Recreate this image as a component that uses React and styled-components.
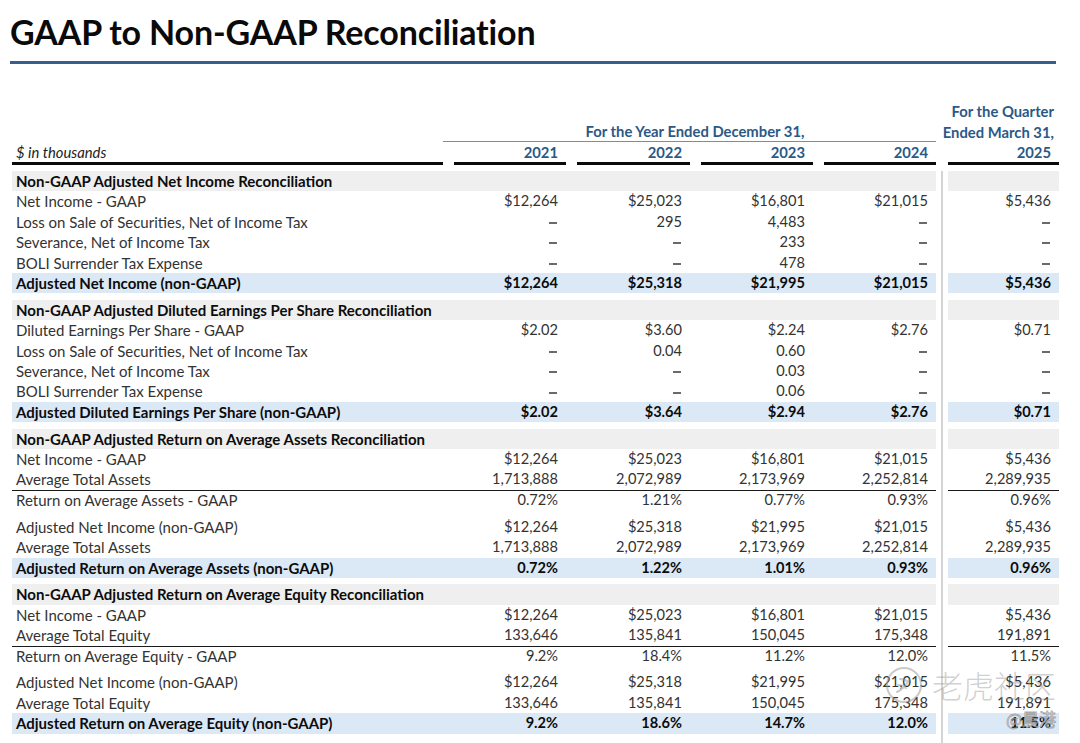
import React from "react";
import styled, { createGlobalStyle } from "styled-components";

const GlobalStyle = createGlobalStyle`
  html, body { margin: 0; padding: 0; background: #ffffff; }
  body { font-family: Lato, "Open Sans", "Liberation Sans", sans-serif; }
  #root { width: 1080px; height: 743px; }
`;

const BLUE_TEXT = "#2b5987";
const GRID = "431px 123px 124px 123px 123px 12px 111px";

const Page = styled.div`
  position: relative;
  width: 1080px;
  height: 743px;
  overflow: hidden;
  background: #fff;
`;

const Title = styled.h1`
  margin: 0;
  padding: 12px 0 0 10px;
  font-family: Lato, "Open Sans", sans-serif;
  font-weight: 700;
  font-size: 34px;
  line-height: 40px;
  color: #0a0a0a;
  letter-spacing: -0.15px;
`;

const TitleRule = styled.div`
  margin: 9px 0 0 10px;
  width: 1046px;
  height: 3px;
  background: #3a5e8b;
`;

const Table = styled.div`
  margin: 36px 0 0 12px;
  width: 1047px;
`;

const HeadRow = styled.div`
  display: grid;
  grid-template-columns: ${GRID};
  height: ${(p) => p.$h || 21}px;
  font-size: 14.8px;
  font-weight: 700;
  color: ${BLUE_TEXT};
`;

const HeadCell = styled.div`
  grid-column: ${(p) => p.$col || "auto"};
  display: flex;
  align-items: center;
  justify-content: ${(p) => (p.$center ? "center" : "flex-end")};
  padding: ${(p) => (p.$center ? "0 0 0 11px" : "0 5px 0 0")};
  white-space: nowrap;
  border-bottom: ${(p) => (p.$thin ? "1px solid #8a8a8a" : "none")};
`;

const UnitCell = styled.div`
  display: flex;
  align-items: center;
  padding-left: 4px;
  font-style: italic;
  font-weight: 400;
  color: #222;
  border-bottom: 3px solid #0a0a0a;
`;

const YearCell = styled.div`
  grid-column: ${(p) => p.$col || "auto"};
  display: flex;
  align-items: center;
  justify-content: flex-end;
  padding-right: 8px;
  margin-left: ${(p) => (p.$full ? 0 : 11)}px;
  border-bottom: 3px solid #0a0a0a;
`;

const Body = styled.div`
  margin-top: 6px;
  padding-bottom: 14px;
  background: linear-gradient(#d4d4d4, #d4d4d4) no-repeat 929px 0 / 2px 100%;
`;

const Row = styled.div`
  display: grid;
  grid-template-columns: ${GRID};
  height: 20.4px;
  margin-top: ${(p) => (p.$gap ? 6.5 : 0)}px;
  font-size: 15px;
  line-height: 20.4px;
  font-weight: ${(p) => (p.$kind === "normal" ? 400 : 700)};
  color: ${(p) => (p.$kind === "normal" ? "#333333" : "#0c0c0c")};
`;

const bgFor = (kind) =>
  kind === "section" ? "#efefef" : kind === "total" ? "#dbe8f6" : "transparent";

const Label = styled.div`
  padding-left: 4px;
  white-space: nowrap;
  background: ${(p) => bgFor(p.$kind)};
  border-bottom: ${(p) => (p.$rule ? "1.5px solid #1a1a1a" : "none")};
  box-sizing: border-box;
`;

const Num = styled.div`
  display: flex;
  align-items: center;
  justify-content: flex-end;
  padding-right: ${(p) => (p.$dash ? 9 : 8)}px;
  font-size: 14.6px;
  white-space: nowrap;
  background: ${(p) => bgFor(p.$kind)};
  border-bottom: ${(p) => (p.$rule ? "1.5px solid #1a1a1a" : "none")};
  box-sizing: border-box;
`;

const Dash = styled.span`
  display: block;
  width: 8px;
  height: 2px;
  margin-top: 2px;
  background: #6a6a6a;
`;

const Spacer = styled.div``;

const Watermark = styled.div`
  position: absolute;
  left: 884px;
  top: 662px;
  display: flex;
  align-items: center;
  gap: 8px;
  pointer-events: none;
`;

const WaterText = styled.span`
  font-family: "Noto Sans CJK SC", sans-serif;
  font-size: 31px;
  font-weight: 300;
  color: rgba(150, 150, 150, 0.45);
`;

const Handle = styled.span`
  position: absolute;
  left: 1006px;
  top: 706px;
  font-family: "Noto Sans CJK SC", sans-serif;
  font-size: 17px;
  color: rgba(255, 255, 255, 0.55);
  -webkit-text-stroke: 0.8px rgba(110, 110, 110, 0.6);
  pointer-events: none;
`;

const D = "–";

const rows = [
  { kind: "section", label: "Non-GAAP Adjusted Net Income Reconciliation" },
  { label: "Net Income - GAAP", v: ["$12,264", "$25,023", "$16,801", "$21,015", "$5,436"] },
  { label: "Loss on Sale of Securities, Net of Income Tax", v: [D, "295", "4,483", D, D] },
  { label: "Severance, Net of Income Tax", v: [D, D, "233", D, D] },
  { label: "BOLI Surrender Tax Expense", v: [D, D, "478", D, D] },
  { kind: "total", label: "Adjusted Net Income (non-GAAP)", v: ["$12,264", "$25,318", "$21,995", "$21,015", "$5,436"] },

  { kind: "section", gap: true, label: "Non-GAAP Adjusted Diluted Earnings Per Share Reconciliation" },
  { label: "Diluted Earnings Per Share - GAAP", v: ["$2.02", "$3.60", "$2.24", "$2.76", "$0.71"] },
  { label: "Loss on Sale of Securities, Net of Income Tax", v: [D, "0.04", "0.60", D, D] },
  { label: "Severance, Net of Income Tax", v: [D, D, "0.03", D, D] },
  { label: "BOLI Surrender Tax Expense", v: [D, D, "0.06", D, D] },
  { kind: "total", label: "Adjusted Diluted Earnings Per Share (non-GAAP)", v: ["$2.02", "$3.64", "$2.94", "$2.76", "$0.71"] },

  { kind: "section", gap: true, label: "Non-GAAP Adjusted Return on Average Assets Reconciliation" },
  { label: "Net Income - GAAP", v: ["$12,264", "$25,023", "$16,801", "$21,015", "$5,436"] },
  { label: "Average Total Assets", rule: true, v: ["1,713,888", "2,072,989", "2,173,969", "2,252,814", "2,289,935"] },
  { label: "Return on Average Assets - GAAP", v: ["0.72%", "1.21%", "0.77%", "0.93%", "0.96%"] },
  { label: "Adjusted Net Income (non-GAAP)", gap: true, v: ["$12,264", "$25,318", "$21,995", "$21,015", "$5,436"] },
  { label: "Average Total Assets", v: ["1,713,888", "2,072,989", "2,173,969", "2,252,814", "2,289,935"] },
  { kind: "total", label: "Adjusted Return on Average Assets (non-GAAP)", v: ["0.72%", "1.22%", "1.01%", "0.93%", "0.96%"] },

  { kind: "section", gap: true, label: "Non-GAAP Adjusted Return on Average Equity Reconciliation" },
  { label: "Net Income - GAAP", v: ["$12,264", "$25,023", "$16,801", "$21,015", "$5,436"] },
  { label: "Average Total Equity", rule: true, v: ["133,646", "135,841", "150,045", "175,348", "191,891"] },
  { label: "Return on Average Equity - GAAP", v: ["9.2%", "18.4%", "11.2%", "12.0%", "11.5%"] },
  { label: "Adjusted Net Income (non-GAAP)", gap: true, v: ["$12,264", "$25,318", "$21,995", "$21,015", "$5,436"] },
  { label: "Average Total Equity", v: ["133,646", "135,841", "150,045", "175,348", "191,891"] },
  { kind: "total", label: "Adjusted Return on Average Equity (non-GAAP)", v: ["9.2%", "18.6%", "14.7%", "12.0%", "11.5%"] },
];

function DataRow({ r }) {
  const kind = r.kind || "normal";
  const vals = r.v || ["", "", "", "", ""];
  const cell = (val, i) => (
    <Num key={i} $kind={kind} $rule={r.rule} $dash={val === D}>
      {val === D ? <Dash role="img" aria-label="–" /> : val}
    </Num>
  );
  return (
    <Row $kind={kind} $gap={r.gap}>
      <Label $kind={kind} $rule={r.rule}>{r.label}</Label>
      {vals.slice(0, 4).map(cell)}
      <Spacer />
      {cell(vals[4], 4)}
    </Row>
  );
}

export default function App() {
  return (
    <Page>
      <GlobalStyle />
      <Title>GAAP to Non-GAAP Reconciliation</Title>
      <TitleRule />
      <Table>
        <HeadRow>
          <HeadCell $col="7">For the Quarter</HeadCell>
        </HeadRow>
        <HeadRow>
          <HeadCell $col="2 / span 4" $center $thin>
            For the Year Ended December 31,
          </HeadCell>
          <HeadCell $col="7">Ended March 31,</HeadCell>
        </HeadRow>
        <HeadRow $h={23}>
          <UnitCell>$ in thousands</UnitCell>
          <YearCell>2021</YearCell>
          <YearCell>2022</YearCell>
          <YearCell>2023</YearCell>
          <YearCell>2024</YearCell>
          <YearCell $col="7" $full>2025</YearCell>
        </HeadRow>
        <Body>
          {rows.map((r, i) => (
            <DataRow key={i} r={r} />
          ))}
        </Body>
      </Table>
      <Watermark>
        <svg width="40" height="40" viewBox="0 0 40 40" fill="none">
          <circle cx="20" cy="20" r="17" stroke="rgba(150,150,150,0.5)" strokeWidth="2" />
          <path d="M13 27c4-2 9-6 12-12M16 14c3 0 6 1 8 3M14 20c3 0 6 1 8 3" stroke="rgba(150,150,150,0.5)" strokeWidth="2" strokeLinecap="round" />
        </svg>
        <WaterText>老虎社区</WaterText>
      </Watermark>
      <Handle>@晨港</Handle>
    </Page>
  );
}
